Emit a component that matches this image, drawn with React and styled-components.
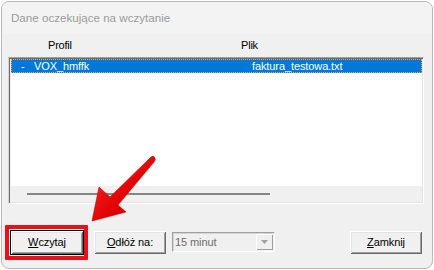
import React from "react";
import styled, { createGlobalStyle } from "styled-components";

const Global = createGlobalStyle`
  html, body { margin: 0; padding: 0; background: #ffffff; }
  body { font-family: "Liberation Sans", Arial, sans-serif; }
  #root { width: 434px; height: 270px; }
`;

const Window = styled.div`
  position: relative;
  box-sizing: border-box;
  margin: 1px;
  width: 432px;
  height: 268px;
  border: 1px solid #b9b9b9;
  border-radius: 8px;
  background: #f0f0f0;
  overflow: hidden;
  display: flex;
  flex-direction: column;
`;

const TitleBar = styled.div`
  height: 32px;
  flex: none;
  background: #f3f3f3;
  display: flex;
  align-items: center;
  padding-left: 9px;
  padding-bottom: 1px;
  box-sizing: border-box;
  font-family: "Liberation Sans", Arial, sans-serif;
  font-size: 11.6px;
  color: #9b9b9b;
`;

const Body = styled.div`
  flex: 1;
  display: flex;
  flex-direction: column;
  padding: 0 8px 0 6px;
  font-family: "Liberation Sans", Arial, sans-serif;
  font-size: 11px;
  color: #000;
`;

const HeaderRow = styled.div`
  height: 23px;
  display: flex;
  align-items: center;
  padding-left: 40px;
  padding-bottom: 1px;
  box-sizing: border-box;
`;

const HeaderLabel = styled.span`
  width: ${(p) => p.$w || "auto"};
  letter-spacing: -0.2px;
`;

const ListFrame = styled.div`
  box-sizing: border-box;
  height: 147px;
  border: 1px solid;
  border-color: #a0a0a0 #ffffff #ffffff #d6d6d6;
  box-shadow: inset 1px 1px 0 #6b6b6b, inset -1px -1px 0 #e3e3e3;
  padding: 1px 1px 1px 2px;
  display: flex;
  flex-direction: column;
  background: #f0f0f0;
`;

const ListArea = styled.div`
  flex: 1;
  background: #ffffff;
`;

const Row = styled.div`
  height: 14px;
  display: flex;
  align-items: center;
  background: ${(p) => (p.$selected ? "#0078d7" : "transparent")};
  color: ${(p) => (p.$selected ? "#ffffff" : "#000")};
  outline: ${(p) => (p.$selected ? "1px dotted #f5a742" : "none")};
  outline-offset: -1px;
  padding-left: 10px;
  box-sizing: border-box;
`;

const Cell = styled.span`
  width: ${(p) => p.$w};
  flex: none;
  white-space: nowrap;
  letter-spacing: -0.1px;
`;

const HScroll = styled.div`
  height: 16px;
  flex: none;
  display: flex;
  align-items: center;
  padding-left: 16px;
`;

const Thumb = styled.div`
  width: 243px;
  height: 2px;
  background: #858585;
`;

const Footer = styled.div`
  flex: 1;
  display: flex;
  align-items: center;
  padding: 12px 2px 0 2px;
`;

const ButtonWrap = styled.div`
  position: relative;
  display: flex;
  &::after {
    content: "";
    position: absolute;
    left: -5px;
    top: -5px;
    right: -4px;
    bottom: -5px;
    border: 4px solid #e8101a;
    border-radius: 1px;
    pointer-events: none;
  }
`;

const Button = styled.button`
  box-sizing: border-box;
  width: ${(p) => (p.$default ? "74px" : "72px")};
  height: ${(p) => (p.$default ? "25px" : "23px")};
  margin: 0;
  padding: 0;
  font-family: "Liberation Sans", Arial, sans-serif;
  font-size: 11px;
  color: #000;
  background: #f0f0f0;
  border: ${(p) => (p.$default ? "1px solid #000" : "none")};
  box-shadow: inset 1px 1px 0 #ffffff, inset -1px -1px 0 #696969,
    inset 2px 2px 0 #e3e3e3, inset -2px -2px 0 #a0a0a0;
  letter-spacing: -0.1px;
  u { text-decoration: underline; text-underline-offset: 1px; }
`;

const Combo = styled.div`
  box-sizing: border-box;
  width: 103px;
  height: 20px;
  margin-left: 6px;
  display: flex;
  align-items: stretch;
  background: #f0f0f0;
  border: 1px solid;
  border-color: #a0a0a0 #ffffff #ffffff #a0a0a0;
  box-shadow: inset 1px 1px 0 #d6d6d6;
`;

const ComboText = styled.span`
  flex: 1;
  display: flex;
  align-items: center;
  padding-left: 2px;
  color: #6d6d6d;
  font-size: 11px;
  letter-spacing: -0.1px;
`;

const ComboButton = styled.div`
  width: 17px;
  flex: none;
  margin: 1px;
  box-sizing: border-box;
  display: flex;
  align-items: center;
  justify-content: center;
  background: #f0f0f0;
  box-shadow: inset 1px 1px 0 #ffffff, inset -1px -1px 0 #a0a0a0;
`;

const Spacer = styled.div`
  flex: 1;
`;

const Gap = styled.div`
  width: ${(p) => p.$w}px;
  flex: none;
`;

const ArrowSvg = styled.svg`
  position: absolute;
  left: 82px;
  top: 148px;
  pointer-events: none;
`;

export default function App() {
  return (
    <>
      <Global />
      <Window>
        <TitleBar>Dane oczekujące na wczytanie</TitleBar>
        <Body>
          <HeaderRow>
            <HeaderLabel $w="193px">Profil</HeaderLabel>
            <HeaderLabel>Plik</HeaderLabel>
          </HeaderRow>
          <ListFrame>
            <ListArea>
              <Row $selected>
                <Cell $w="13px">-</Cell>
                <Cell $w="218px">VOX_hmffk</Cell>
                <Cell $w="auto">faktura_testowa.txt</Cell>
              </Row>
            </ListArea>
            <HScroll>
              <Thumb />
            </HScroll>
          </ListFrame>
          <Footer>
            <ButtonWrap>
              <Button $default>
                <u>W</u>czytaj
              </Button>
            </ButtonWrap>
            <Gap $w={10} />
            <Button>
              <u>O</u>dłóż na:
            </Button>
            <Combo>
              <ComboText>15 minut</ComboText>
              <ComboButton>
                <svg width="7" height="4" viewBox="0 0 7 4">
                  <path d="M0 0 H7 L3.5 4 Z" fill="#a0a0a0" />
                </svg>
              </ComboButton>
            </Combo>
            <Spacer />
            <Button>
              <u>Z</u>amknij
            </Button>
          </Footer>
        </Body>
        <ArrowSvg width="76" height="76" viewBox="0 0 76 76">
          <defs>
            <linearGradient id="ag" x1="0" y1="0" x2="1" y2="1">
              <stop offset="0" stopColor="#ff3030" />
              <stop offset="0.6" stopColor="#e00000" />
              <stop offset="1" stopColor="#b80000" />
            </linearGradient>
          </defs>
          <path
            d="M8 71 L15 37 L26 47 L67 7 Q70 5 71 8 Q72 10 70 12 L34 55 L42 62 Z"
            fill="url(#ag)"
            stroke="#c40000"
            strokeWidth="0.6"
            strokeLinejoin="round"
          />
        </ArrowSvg>
      </Window>
    </>
  );
}
